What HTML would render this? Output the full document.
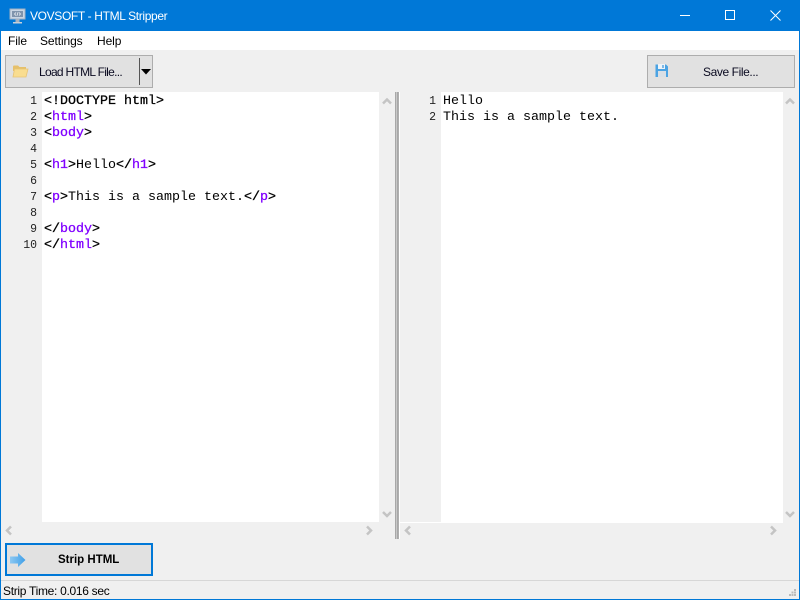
<!DOCTYPE html>
<html><head><meta charset="utf-8"><style>
html,body{margin:0;padding:0;width:800px;height:600px;overflow:hidden;background:#f0f0f0}
body{position:relative;font-family:"Liberation Sans",sans-serif;font-size:12px;color:#000}
.a{position:absolute;white-space:pre}
.btn{position:absolute;box-sizing:border-box;background:#e1e1e1;border:1px solid #adadad}
.code{position:absolute;font:13.33px/16px "Liberation Mono",monospace;white-space:pre;color:#000}
.code b{font-weight:normal;-webkit-text-stroke:.3px #000}
.code i{font-style:normal;color:#8000ff;-webkit-text-stroke:.3px #8000ff}
.num{position:absolute;font:11.5px/16px "Liberation Mono",monospace;text-align:right;white-space:pre;color:#222;width:20px}
svg{position:absolute;overflow:visible}
</style></head><body>
<div class="a" style="left:0;top:0;width:800px;height:31px;background:#0078d7"></div>
<svg style="left:9px;top:8px" width="18" height="16" viewBox="0 0 18 16"><rect x="1" y="1" width="15" height="10" fill="#c9d6e4" stroke="#9fb0c2"/><rect x="3" y="3" width="11" height="6" fill="#7f94ac"/><path d="M7 4.500 5.500 6 7 7.500M10 4.500 11.500 6 10 7.500M9.100 4.200 7.900 7.800" stroke="#fff" fill="none" stroke-width=".7"/><rect x="6.500" y="11" width="4" height="3" fill="#a8b4c0"/><rect x="4" y="14" width="9" height="1.500" fill="#c8d0d8"/></svg>
<div class="a" style="left:30px;top:8px;color:#fff;font-size:12px;letter-spacing:-.35px;line-height:16px">VOVSOFT - HTML Stripper</div>
<svg style="left:680px;top:10px" width="110" height="12" viewBox="0 0 110 12"><path d="M0 5.500H10" stroke="#fff" fill="none"/><rect x="45.500" y=".5" width="9" height="9" stroke="#fff" fill="none"/><path d="M90.500 .5 100.500 10.500M100.500 .5 90.500 10.500" stroke="#fff" fill="none"/></svg>

<div class="a" style="left:1px;top:31px;width:798px;height:19px;background:#fff"></div>
<div class="a" style="left:8px;top:34px;line-height:15px;letter-spacing:-.1px">File</div>
<div class="a" style="left:40px;top:34px;line-height:15px;letter-spacing:-.1px">Settings</div>
<div class="a" style="left:97px;top:34px;line-height:15px;letter-spacing:-.1px">Help</div>

<div class="btn" style="left:5px;top:55px;width:148px;height:33px"></div>
<div class="a" style="left:139px;top:58px;width:1px;height:27px;background:#555"></div>
<svg style="left:12px;top:64px" width="17" height="14" viewBox="0 0 17 14"><path d="M1 3Q1 1.500 2 1.500H6L7.500 3H14V7H1Z" fill="#e6c06a"/><path d="M2.500 5H16L14 13H1Z" fill="#f9dd90" stroke="#e8c477" stroke-width=".8"/></svg>
<div class="a" style="left:39px;top:65px;line-height:15px;color:#0a0a20;letter-spacing:-.7px">Load HTML File...</div>
<svg style="left:141px;top:69px" width="10" height="6"><path d="M0 0H10L5 5.500Z" fill="#000"/></svg>

<div class="btn" style="left:647px;top:55px;width:148px;height:33px"></div>
<svg style="left:655px;top:64px" width="14" height="14" viewBox="0 0 14 14"><path d="M.5 .5H11L13 2.500V13H.5Z" fill="#4ba3e3"/><rect x="3" y="0" width="7" height="5" fill="#eef3f8"/><rect x="7" y="1" width="2" height="3" fill="#7fb9e6"/><rect x="3" y="7" width="8" height="6" fill="#d9dfe5"/></svg>
<div class="a" style="left:703px;top:65px;line-height:15px;color:#0a0a20;letter-spacing:-.4px">Save File...</div>

<div class="a" style="left:42px;top:92px;width:337px;height:430px;background:#fff"></div>
<div class="a" style="left:441px;top:92px;width:342px;height:430px;background:#fff"></div>
<div class="a" style="left:395px;top:92px;width:1px;height:447px;background:#a8a8a8"></div>
<div class="a" style="left:396px;top:92px;width:1px;height:447px;background:#c8c8c8"></div>
<div class="a" style="left:397px;top:92px;width:1px;height:447px;background:#a8a8a8"></div>
<div class="a" style="left:398px;top:92px;width:1px;height:447px;background:#b0b0b0"></div>
<div class="a" style="left:399px;top:92px;width:1px;height:447px;background:#fff"></div>
<div class="a" style="left:400px;top:522px;width:383px;height:1px;background:#fff"></div>

<div class="num" style="left:17px;top:94px">1
2
3
4
5
6
7
8
9
10</div>
<div class="code" style="left:44px;top:94px"><b>&lt;!DOCTYPE html&gt;</b>
<b>&lt;</b><i>html</i><b>&gt;</b>
<b>&lt;</b><i>body</i><b>&gt;</b>

<b>&lt;</b><i>h1</i><b>&gt;</b>Hello<b>&lt;/</b><i>h1</i><b>&gt;</b>

<b>&lt;</b><i>p</i><b>&gt;</b>This is a sample text.<b>&lt;/</b><i>p</i><b>&gt;</b>

<b>&lt;/</b><i>body</i><b>&gt;</b>
<b>&lt;/</b><i>html</i><b>&gt;</b></div>

<div class="num" style="left:416px;top:94px">1
2</div>
<div class="code" style="left:443px;top:94px">Hello
This is a sample text.</div>

<svg style="left:0;top:0" width="800" height="600"><g fill="none" stroke="#c4c4c4" stroke-width="2.500"><path d="M383 103.500 387 99.500 391 103.500M383 512 387 516 391 512M786 103.500 790 99.500 794 103.500M786 512 790 516 794 512M11 526.500 7 530.500 11 534.500M367 526.500 371 530.500 367 534.500M410 526.500 406 530.500 410 534.500M771 526.500 775 530.500 771 534.500"/></g></svg>

<div class="btn" style="left:5px;top:543px;width:148px;height:33px;border:2px solid #0078d7"></div>
<svg style="left:10px;top:552px" width="16" height="16" viewBox="0 0 16 16"><defs><linearGradient id="g" x1="0" x2="1" y1="0" y2="0"><stop offset="0" stop-color="#8cc8f2"/><stop offset="1" stop-color="#3f9fe8"/></linearGradient></defs><path d="M0 4.500H8V1L15.500 8 8 15V11.500H0Z" fill="url(#g)"/></svg>
<div class="a" style="left:58px;top:553px;line-height:15px;font-weight:bold;font-size:11.500px">Strip HTML</div>

<div class="a" style="left:1px;top:580px;width:798px;height:1px;background:#d7d7d7"></div>
<div class="a" style="left:3px;top:584px;line-height:15px;letter-spacing:-.3px">Strip Time: 0.016 sec</div>
<svg style="left:789px;top:589px" width="8" height="8"><path d="M5 0h2v2H5zM2.500 2.500h2v2h-2zM5 2.500h2v2H5zM0 5h2v2H0zM2.500 5h2v2h-2zM5 5h2v2H5z" fill="#bbb"/></svg>

<div class="a" style="left:0;top:0;width:1px;height:600px;background:#0078d7"></div>
<div class="a" style="left:799px;top:0;width:1px;height:600px;background:#0078d7"></div>
<div class="a" style="left:0;top:599px;width:800px;height:1px;background:#0078d7"></div>
</body></html>
